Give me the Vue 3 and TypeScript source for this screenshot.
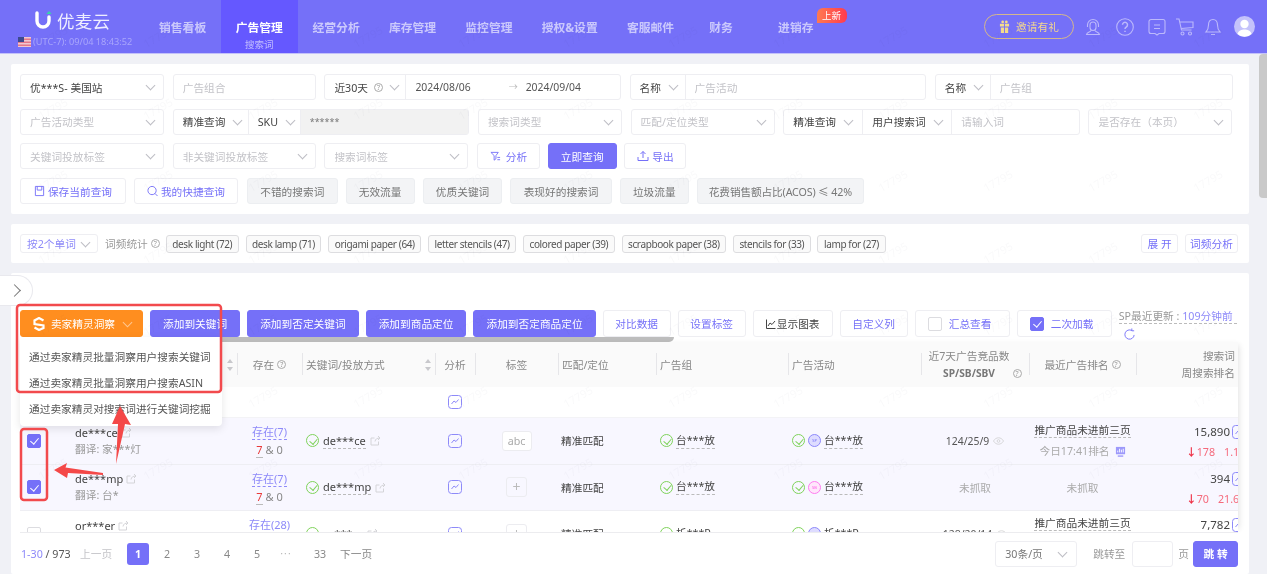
<script setup lang="ts">
interface Row {
  checked: boolean
  kw: string
  tr: string
  exist: string
  kw2: string
  tag: 'abc' | 'plus'
  group: string
  camp: 'sp' | 'sb'
  campName: string
  comp: string
  rank: boolean
  num: string
  down: string
  pct: string
}

const nav = ['销售看板', '广告管理', '经营分析', '库存管理', '监控管理', '授权&设置', '客服邮件', '财务', '进销存']
const quick = ['不错的搜索词', '无效流量', '优质关键词', '表现好的搜索词', '垃圾流量', '花费销售额占比(ACOS) ≤ 42%']
const tags = ['desk light (72)', 'desk lamp (71)', 'origami paper (64)', 'letter stencils (47)', 'colored paper (39)', 'scrapbook paper (38)', 'stencils for (33)', 'lamp for (27)']
const actions = ['添加到关键词', '添加到否定关键词', '添加到商品定位', '添加到否定商品定位']
const menu = ['通过卖家精灵批量洞察用户搜索关键词', '通过卖家精灵批量洞察用户搜索ASIN', '通过卖家精灵对搜索词进行关键词挖掘']
const pages = ['2', '3', '4', '5']
const marks = Array.from({ length: 84 }, (_, i) => i)

const rows: Row[] = [
  { checked: true, kw: 'de***ce', tr: '翻译: 家***灯', exist: '存在(7)', kw2: 'de***ce', tag: 'abc', group: '台***放', camp: 'sp', campName: '台***放', comp: '124/25/9', rank: true, num: '15,890', down: '178', pct: '1.13%' },
  { checked: true, kw: 'de***mp', tr: '翻译: 台*', exist: '存在(7)', kw2: 'de***mp', tag: 'plus', group: '台***放', camp: 'sb', campName: '台***放', comp: '', rank: false, num: '394', down: '70', pct: '21.60%' },
  { checked: false, kw: 'or***er', tr: '翻译: 折***', exist: '存在(28)', kw2: 'or***er', tag: 'plus', group: '析***P', camp: 'sp', campName: '析***P', comp: '128/20/14', rank: true, num: '7,782', down: '', pct: '' },
]
</script>

<template>
  <div class="page">
    <header class="topbar">
      <div class="brand">
        <div class="logo">
          <svg class="logo-mark" viewBox="0 0 18 20" width="18" height="20">
            <path d="M3 3v8a6 6 0 0 0 12 0V7" fill="none" stroke="#fff" stroke-width="3.4" stroke-linecap="round" />
            <path d="M15 1l2.6 3h-5.2z" fill="#36d6a8" />
          </svg>
          <span class="logo-text">优麦云</span>
        </div>
        <div class="clock">
          <svg viewBox="0 0 13 10" width="13" height="10" class="flag">
            <rect width="13" height="10" fill="#f1c8d0" />
            <rect y="1.5" width="13" height="1.5" fill="#e4788a" />
            <rect y="4.5" width="13" height="1.5" fill="#e4788a" />
            <rect y="7.5" width="13" height="1.5" fill="#e4788a" />
            <rect width="6" height="5" fill="#3d4a8f" />
          </svg>
          <span>(UTC-7): 09/04 18:43:52</span>
        </div>
      </div>
      <nav class="nav">
        <div v-for="(n, i) in nav" :key="n" class="nav-item" :class="{ active: i === 1, far: i === 7, farther: i === 8 }">
          <span class="nav-label">{{ n }}</span>
          <span v-if="i === 1" class="nav-sub">搜索词</span>
          <span v-if="i === 8" class="nav-new">上新</span>
        </div>
      </nav>
      <div class="top-right">
        <div class="invite">
          <svg viewBox="0 0 12 14" width="11" height="13"><path d="M1 4h10v3H1zM2 8h8v6H2z" fill="#f6dc8c" /><path d="M6 4v10" stroke="#7570f8" /><circle cx="4" cy="2" r="1.5" fill="#f6dc8c" /><circle cx="8" cy="2" r="1.5" fill="#f6dc8c" /></svg>
          <span>邀请有礼</span>
        </div>
        <svg class="ti" viewBox="0 0 20 20" width="20" height="20"><path d="M4.5 10V8a5.5 5.5 0 0 1 11 0v2M7 8a3 3 0 0 1 6 0v2.500a3 3 0 0 1-6 0zM8 13.500c-.3 1.600-4 1.600-4.500 4h13c-.5-2.400-4.200-2.400-4.500-4" /></svg>
        <svg class="ti" viewBox="0 0 20 20" width="20" height="20"><circle cx="10" cy="10" r="8.300" /><path d="M7.500 7.800a2.500 2.500 0 1 1 3.800 2.200c-.9.500-1.300 1-1.300 2" stroke-width="1.500" /><path d="M10 13.800v1.200" stroke-width="1.500" /></svg>
        <svg class="ti" viewBox="0 0 20 20" width="20" height="20"><path d="M4 2.500h12a2 2 0 0 1 2 2v10a2 2 0 0 1-2 2h-4l-2 1.500-2-1.500H4a2 2 0 0 1-2-2v-10a2 2 0 0 1 2-2zM7 8h6M7 11.500h6" /></svg>
        <svg class="ti near" viewBox="0 0 20 20" width="20" height="20"><path d="M1 2h3l2.500 11h10M5 5h13v5.500L6 11.500" /><circle cx="7.500" cy="16.500" r="1.500" /><circle cx="15" cy="16.500" r="1.500" /></svg>
        <svg class="ti near" viewBox="0 0 20 20" width="20" height="20"><path d="M10 2.500c-3 0-4.500 2.500-4.500 5.500 0 4-1.500 6-2.500 7h14c-1-1-2.500-3-2.500-7 0-3-1.500-5.500-4.500-5.500zM8 17.500h4" /></svg>
        <svg class="avatar" viewBox="0 0 21 21" width="21" height="21"><circle cx="10.500" cy="10.500" r="10.500" fill="#c4c2fb" /><circle cx="10.500" cy="8" r="4.200" fill="#fff" /><path d="M3.500 18c1-3.500 4-4.500 7-4.500s6 1 7 4.500a10 10 0 0 1-14 0z" fill="#fff" /></svg>
      </div>
    </header>

    <main class="content">
      <section class="card filters">
        <div class="frow">
          <div class="field w-s"><span class="val">优***S- 美国站</span><i class="chev" /></div>
          <div class="field w-s2"><span class="ph">广告组合</span></div>
          <div class="field w-l">
            <div class="seg seg-range"><span class="val">近30天</span><span class="qm">?</span><i class="chev" /></div>
            <div class="dates"><span>2024/08/06</span><span class="to">→</span><span>2024/09/04</span></div>
          </div>
          <div class="field w-l">
            <div class="seg seg-name"><span class="val">名称</span><i class="chev" /></div>
            <span class="ph pad">广告活动</span>
          </div>
          <div class="field w-l wide">
            <div class="seg seg-name"><span class="val">名称</span><i class="chev" /></div>
            <span class="ph pad">广告组</span>
          </div>
        </div>
        <div class="frow">
          <div class="field w-s"><span class="ph">广告活动类型</span><i class="chev" /></div>
          <div class="field w-l">
            <div class="seg seg-exact"><span class="val">精准查询</span><i class="chev" /></div>
            <div class="seg seg-sku"><span class="val">SKU</span><i class="chev" /></div>
            <div class="masked">******</div>
          </div>
          <div class="field w-s"><span class="ph">搜索词类型</span><i class="chev" /></div>
          <div class="field w-s"><span class="ph">匹配/定位类型</span><i class="chev" /></div>
          <div class="field w-l">
            <div class="seg seg-exact2"><span class="val">精准查询</span><i class="chev" /></div>
            <div class="seg seg-user"><span class="val">用户搜索词</span><i class="chev" /></div>
            <span class="ph pad">请输入词</span>
          </div>
          <div class="field w-s"><span class="ph">是否存在（本页）</span><i class="chev" /></div>
        </div>
        <div class="frow">
          <div class="field w-s"><span class="ph">关键词投放标签</span><i class="chev" /></div>
          <div class="field w-s2"><span class="ph">非关键词投放标签</span><i class="chev" /></div>
          <div class="field w-s"><span class="ph">搜索词标签</span><i class="chev" /></div>
          <button class="btn b-analyze">
            <svg viewBox="0 0 12 12" width="11" height="11" class="si"><path d="M1 1.500h8L6.500 5v3.500L4.500 10V5zM8 7h3M8 9.500h3" /></svg>
            分析
          </button>
          <button class="btn primary b-query">立即查询</button>
          <button class="btn b-export">
            <svg viewBox="0 0 12 12" width="12" height="12" class="si"><path d="M6 8V1.500M3.500 4 6 1.500 8.500 4M1 7v3.500h10V7" /></svg>
            导出
          </button>
        </div>
        <div class="frow qrow">
          <button class="btn b-save">
            <svg viewBox="0 0 12 12" width="11" height="12" class="si"><path d="M1.500 1h9v10h-9zM3.500 1v4h5V1" /></svg>
            保存当前查询
          </button>
          <button class="btn b-mine">
            <svg viewBox="0 0 12 12" width="11" height="12" class="si" stroke-width="1.300"><circle cx="5.500" cy="5.500" r="4.500" /><path d="m8.500 8.500 3 3" /></svg>
            我的快捷查询
          </button>
          <button v-for="q in quick" :key="q" class="btn gray">{{ q }}</button>
        </div>
      </section>

      <section class="card freq">
        <div class="freq-sel"><span>按2个单词</span><i class="chev" /></div>
        <span class="freq-label">词频统计</span><span class="qm">?</span>
        <div class="tags">
          <span v-for="t in tags" :key="t" class="tag">{{ t }}</span>
        </div>
        <button class="btn small b-open">展 开</button>
        <button class="btn small">词频分析</button>
      </section>

      <section class="card main-card">
        <div class="toolbar">
          <div class="seller-wrap">
            <button class="btn seller">
              <svg viewBox="0 0 14 14" width="14" height="14"><path d="M11.500 3.500 7 1 2.500 3.500V7l9 1.500v2.500L7 13l-4.500-2.500" fill="none" stroke="#fff" stroke-width="2.200" /></svg>
              <span>卖家精灵洞察</span>
              <i class="chev chev-w" />
            </button>
            <ul class="menu">
              <li v-for="m in menu" :key="m">{{ m }}</li>
            </ul>
          </div>
          <button v-for="a in actions" :key="a" class="btn primary act">{{ a }}</button>
          <button class="btn tool">对比数据</button>
          <button class="btn tool">设置标签</button>
          <button class="btn tool dark">
            <svg viewBox="0 0 10 10" width="10" height="10" class="si dk"><path d="M.5.500v9h9M2 7l2-3 2 1.500L9 2" /></svg>
            显示图表
          </button>
          <button class="btn tool">自定义列</button>
          <button class="btn tool chk-btn"><i class="cb" /><span>汇总查看</span></button>
          <button class="btn tool chk-btn"><i class="cb on" /><span>二次加载</span></button>
          <div class="update">
            <div class="update-line">SP最近更新 : <b>109分钟前</b></div>
            <svg viewBox="0 0 14 14" width="13" height="13" class="si refresh" stroke-width="1.500"><path d="M12 7.500A5 5 0 1 1 9.500 2.700M9.500.500v2.500H12" /></svg>
          </div>
        </div>
        <div class="bar-shade" />

        <div class="table">
          <div class="grid thead">
            <div class="th" />
            <div class="th sortable"><i class="sort" /></div>
            <div class="th sep center"><span>存在</span><span class="qm">?</span></div>
            <div class="th sep sortable"><span>关键词/投放方式</span><i class="sort" /></div>
            <div class="th sep center">分析</div>
            <div class="th sep center">标签</div>
            <div class="th sep">匹配/定位</div>
            <div class="th sep">广告组</div>
            <div class="th sep">广告活动</div>
            <div class="th sep stack comp-head">
              <span>近7天广告竞品数</span>
              <span class="th-sub"><b>SP/SB/SBV</b><span class="qm abs">?</span></span>
            </div>
            <div class="th sep center"><span>最近广告排名</span><span class="qm">?</span></div>
            <div class="th sep stack end"><span>搜索词</span><span>周搜索排名</span></div>
          </div>
          <div class="tbody">
            <div class="grid summary">
              <div /><div /><div /><div />
              <div class="td center">
                <svg class="chart" viewBox="0 0 14 14" width="14" height="14"><rect x=".5" y=".5" width="13" height="13" rx="3" /><path d="M3.500 9 6 6l2 1.500 2.500-3" /></svg>
              </div>
            </div>
            <div v-for="r in rows" :key="r.kw" class="grid row" :class="{ picked: r.checked }">
              <div class="td center-cb"><i class="cb" :class="{ on: r.checked }" /></div>
              <div class="td kw">
                <div class="kw-top">{{ r.kw }}
                  <svg class="share" viewBox="0 0 11 11" width="11" height="11"><path d="M8.500 6.500v3.500h-7.500V3h3.500M5 6.500c.4-2.500 2-3.500 5-3.500M8 1l2 2-2 2" /></svg>
                </div>
                <div class="muted">{{ r.tr }}</div>
              </div>
              <div class="td center col">
                <span class="link">{{ r.exist }}</span>
                <span class="nums"><em>7</em> &amp; 0</span>
              </div>
              <div class="td kw2">
                <i class="ok" /><span class="dashed">{{ r.kw2 }}</span>
                <svg class="share" viewBox="0 0 11 11" width="11" height="11"><path d="M8.500 6.500v3.500h-7.500V3h3.500M5 6.500c.4-2.500 2-3.500 5-3.500M8 1l2 2-2 2" /></svg>
              </div>
              <div class="td center">
                <svg class="chart" viewBox="0 0 14 14" width="14" height="14"><rect x=".5" y=".5" width="13" height="13" rx="3" /><path d="M3.500 9 6 6l2 1.500 2.500-3" /></svg>
              </div>
              <div class="td center">
                <span v-if="r.tag === 'abc'" class="abc">abc</span>
                <span v-else class="plus">+</span>
              </div>
              <div class="td text">精准匹配</div>
              <div class="td icons"><i class="ok" /><span class="dashed">{{ r.group }}</span></div>
              <div class="td icons">
                <i class="ok" /><i class="badge" :class="r.camp">{{ r.camp.toUpperCase() }}</i><span class="dashed">{{ r.campName }}</span>
              </div>
              <div class="td center">
                <template v-if="r.comp">
                  <span class="comp">{{ r.comp }}</span>
                  <svg viewBox="0 0 12 8" width="11" height="8" class="eye"><path d="M.5 4C2 1.500 4 .5 6 .5s4 1 5.500 3.500C10 6.500 8 7.500 6 7.500S2 6.500.5 4z" /><circle cx="6" cy="4" r="1.500" /></svg>
                </template>
                <span v-else class="none">未抓取</span>
              </div>
              <div class="td center col">
                <template v-if="r.rank">
                  <span class="dashed rank">推广商品未进前三页</span>
                  <span class="none when">今日17:41排名
                    <svg viewBox="0 0 12 12" width="11" height="11"><path d="M1 1h10v8H1z" fill="#9d99fb" /><path d="M3 7V5M5 7V3M7 7V4M9 7V3" stroke="#fff" /><path d="M3 11h6" stroke="#9d99fb" stroke-width="1.500" /></svg>
                  </span>
                </template>
                <span v-else class="none">未抓取</span>
              </div>
              <div class="td last">
                <div class="last-num">
                  <span>{{ r.num }}</span>
                  <svg class="chart" viewBox="0 0 14 14" width="14" height="14"><rect x=".5" y=".5" width="13" height="13" rx="3" /><path d="M3.500 9 6 6l2 1.500 2.500-3" /></svg>
                </div>
                <div v-if="r.down" class="last-delta"><span class="delta-val"><b>↓</b>{{ r.down }}</span><span>{{ r.pct }}</span></div>
              </div>
            </div>
          </div>
        </div>

        <footer class="pager">
          <span class="total"><b>1-30</b> / 973</span>
          <span class="pg-prev">上一页</span>
          <span class="pg-cur">1</span>
          <span v-for="p in pages" :key="p" class="pg">{{ p }}</span>
          <span class="pg-dots">• • •</span>
          <span class="pg-last">33</span>
          <span class="pg-next">下一页</span>
          <div class="pager-right">
            <div class="size"><span>30条/页</span><i class="chev" /></div>
            <span class="jump">跳转至</span>
            <div class="jump-in" />
            <span class="jump-pg">页</span>
            <button class="btn primary go">跳 转</button>
          </div>
        </footer>
      </section>
    </main>

    <div class="expander"><i class="chev-r" /></div>
    <div class="scroll-thumb" />

    <div class="watermark" aria-hidden="true">
      <span v-for="m in marks" :key="m">17795</span>
    </div>

    <svg class="annot" viewBox="0 0 1267 574" width="1267" height="574" aria-hidden="true">
      <rect x="17" y="305" width="204" height="87" rx="3" />
      <rect x="21" y="429" width="26" height="71" rx="3" />
      <path class="fill" d="M116 464 125 424 131 425 120 406 112 424 118 424z" />
      <path class="fill" d="M54 470 67 463 65.500 467.500 103 473 103 475 68 473 67 478z" />
    </svg>
  </div>
</template>

<style>
html, body { margin: 0; background: #f0f2f5; }
</style>

<style scoped>
* { box-sizing: border-box; }
.page {
  position: relative;
  width: 1267px;
  height: 574px;
  overflow: hidden;
  display: flex;
  flex-direction: column;
  background: #f0f1f6;
  font-family: "Noto Sans", "Noto Sans CJK SC", sans-serif;
  font-size: 10.7px;
  color: #444;
  filter: blur(0.35px);
}
i { display: inline-block; font-style: normal; }
button { font-family: inherit; cursor: default; }

/* top bar */
.topbar {
  flex: none;
  height: 54px;
  display: flex;
  background: #7570f8;
  border-bottom: 1px solid #c3c1fa;
  color: #fff;
}
.brand { width: 144px; flex: none; padding: 8px 0 0 18px; }
.logo { display: flex; align-items: center; margin-left: 16px; height: 24px; }
.logo-mark { flex: none; }
.logo-text { margin-left: 5px; font-size: 17.5px; color: #eef; letter-spacing: 0.3px; }
.clock { display: flex; align-items: center; gap: 2px; margin-top: 3px; font-size: 9.2px; color: #a9a6fb; white-space: nowrap; }
.flag { flex: none; }
.nav { display: flex; }
.nav-item {
  position: relative;
  display: flex;
  flex-direction: column;
  align-items: center;
  padding: 0 14.6px;
  height: 53px;
  color: rgba(255, 255, 255, .62);
  font-size: 11.8px;
  font-weight: 700;
}
.nav-item:first-child { padding: 0 14.5px 0 15px; }
.nav-label { margin-top: 19px; line-height: 16px; white-space: nowrap; }
.nav-item.active { background: #6558ff; color: #fff; padding: 0 15px; }
.nav-sub { font-size: 9.5px; font-weight: 400; color: rgba(255, 255, 255, .6); line-height: 13px; margin-top: 3px; }
.nav-item.far { margin-left: 6px; }
.nav-item.farther { margin-left: 16px; }
.nav-new {
  position: absolute;
  left: 53px;
  top: 8px;
  width: 30px;
  height: 15px;
  line-height: 15px;
  text-align: center;
  border-radius: 6px 6px 6px 0;
  background: linear-gradient(90deg, #ff7a50, #ff3a4f);
  font-size: 9.5px;
  font-weight: 400;
  color: #fff;
}
.top-right { margin-left: auto; display: flex; align-items: center; height: 53px; padding-right: 12.5px; }
.invite {
  width: 90px;
  height: 25px;
  border: 1px solid #d5b78c;
  border-radius: 13px;
  display: flex;
  align-items: center;
  justify-content: center;
  gap: 6px;
  color: #f3d690;
  margin-right: 9px;
}
.ti {
  margin-left: 12px;
  fill: none;
  stroke: #bcb9fb;
  stroke-width: 1.1;
}
.invite + .ti { margin-left: 0; }
.ti.near { margin-left: 8px; }
.avatar { margin-left: 10.5px; }

/* layout */
.content { flex: 1; min-height: 0; padding: 10px 18px 0 11px; display: flex; flex-direction: column; }
.card { background: #fff; border-radius: 2px; }

/* filters */
.filters { height: 150px; padding: 10px 9px; display: flex; flex-direction: column; gap: 8.7px; }
.frow { display: flex; gap: 8.7px; height: 26px; }
.field {
  height: 26px;
  border: 1px solid #eeeef2;
  border-radius: 3px;
  background: #fff;
  display: flex;
  align-items: center;
  padding-left: 9px;
  position: relative;
  white-space: nowrap;
}
.field > .chev { position: absolute; right: 9px; top: 7px; }
.w-s { width: 144px; }
.w-s2 { width: 143px; }
.w-l { width: 296.5px; padding-left: 0; }
.w-l.wide { width: 298px; }
.val { color: #444; }
.ph { color: #c3c3c8; }
.pad { padding-left: 9px; }
.chev {
  width: 7px;
  height: 7px;
  border-right: 1px solid #bdbdc4;
  border-bottom: 1px solid #bdbdc4;
  transform: rotate(45deg);
  flex: none;
}
.seg { height: 100%; display: flex; align-items: center; padding-left: 9px; border-right: 1px solid #eeeef2; flex: none; gap: 6px; }
.seg .chev { margin-top: -3px; margin-left: 3px; }
.seg-range { width: 81px; padding-right: 5px; gap: 3px; }
.seg-range .chev { margin-left: 5px; }
.seg-name { width: 55px; }
.seg-exact { width: 75px; }
.seg-sku { width: 52px; }
.seg-exact2 { width: 79px; }
.seg-user { width: 89px; }
.masked { flex: 1; height: 100%; background: #f2f2f2; color: #777; display: flex; align-items: center; padding-left: 9px; font-size: 9px; }
.dates { display: flex; flex: 1; padding-left: 9px; color: #555; font-size: 10.4px; }
.to { color: #bbb; margin: 0 9px 0 38px; width: 8px; font-size: 9px; }
.qm {
  display: inline-flex;
  align-items: center;
  justify-content: center;
  width: 9px;
  height: 9px;
  margin-left: 3px;
  border: 1px solid #aaa;
  border-radius: 50%;
  font-size: 7px;
  line-height: 1;
  color: #999;
  flex: none;
}
.btn {
  height: 26px;
  border: 1px solid #eeeef2;
  border-radius: 3px;
  background: #fff;
  color: #7570f8;
  font-size: 10.7px;
  padding: 0;
  display: inline-flex;
  align-items: center;
  justify-content: center;
  gap: 3px;
  white-space: nowrap;
  flex: none;
}
.si { fill: none; stroke: #7570f8; stroke-width: 1; }
.si.dk { stroke: #444; }
.btn.primary { background: #7570f8; border-color: #7570f8; color: #fff; }
.b-analyze { width: 63px; margin-right: -1px; gap: 5px; }
.b-query { width: 69px; }
.b-export { width: 62px; margin-left: -1px; }
.qrow { gap: 8px; }
.b-save { width: 106px; }
.b-mine { width: 104px; margin-right: 1px; }
.gray { background: #f3f4f6; color: #777; border-color: #eceef1; padding: 0 12.2px; }
.gray:last-child { padding: 0 11px; letter-spacing: -0.15px; }

/* frequency */
.freq { height: 39px; margin-top: 10px; display: flex; align-items: center; padding: 0 11px 0 9px; white-space: nowrap; }
.freq-sel {
  width: 78px;
  height: 19px;
  border: 1px solid #eeeef2;
  border-radius: 3px;
  display: flex;
  align-items: center;
  justify-content: space-between;
  padding: 0 8px 0 6px;
  color: #8e8af9;
}
.freq-sel .chev { margin-top: -3px; }
.freq-label { margin-left: 7px; color: #999; }
.tags { display: flex; gap: 6.8px; margin-left: 6px; flex: 1; }
.tag {
  height: 18px;
  line-height: 16px;
  padding: 0 5.5px;
  border: 1px solid #dddde0;
  border-radius: 3px;
  background: #fafafa;
  color: #555;
  font-size: 10px;
  letter-spacing: -0.38px;
}
.small { height: 19px; }
.b-open { width: 37px; margin-right: 7px; }
.freq .small:last-child { width: 53px; }

/* main card */
.main-card { margin-top: 10px; flex: 1; min-height: 0; padding: 37px 11px 0 9px; display: flex; flex-direction: column; position: relative; }
.toolbar { display: flex; gap: 7px; height: 27px; flex: none; }
.toolbar .btn { height: 27px; }
.seller-wrap { position: relative; width: 123px; flex: none; }
.btn.seller { width: 123px; background: #ff8e1f; border-color: #ff8e1f; color: #fff; gap: 5px; }
.chev-w { border-color: rgba(255, 255, 255, .5); margin: -3px 0 0 4px; }
.menu {
  position: absolute;
  z-index: 5;
  top: 27px;
  left: 0;
  width: 202px;
  height: 89px;
  margin: 0;
  padding: 7px 0 0;
  list-style: none;
  background: #fff;
  border-radius: 0 0 4px 4px;
  box-shadow: 0 3px 8px rgba(0, 0, 0, .1);
}
.menu li { height: 26px; line-height: 26px; padding-left: 9px; color: #555; white-space: nowrap; }
.act { padding: 0 12px; }
.tool { width: 68px; }
.tool.dark { width: 80px; color: #444; gap: 1px; }
.chk-btn { width: 95px; justify-content: flex-start; padding-left: 12px; gap: 7px; }
.update { width: 118px; flex: none; color: #999; white-space: nowrap; position: relative; }
.update-line { height: 14px; line-height: 13px; border-bottom: 1px dashed #bbb; }
.update-line b { font-weight: 400; color: #8e8af9; }
.refresh { display: block; margin: 4px 0 0 4px; }
.bar-shade { flex: none; height: 5px; width: 654px; background: #bdbdbd; border-radius: 0 0 5px 5px; }

/* table */
.table { flex: 1; min-height: 0; width: 1218px; display: flex; flex-direction: column; overflow: hidden; box-shadow: 4px 0 6px -3px rgba(0, 0, 0, .12); }
.grid {
  display: grid;
  grid-template-columns: 55px 162px 65px 133px 40px 83px 98px 132px 133px 108px 107px 102px;
}
.thead { height: 45px; flex: none; background: #fafafa; color: #888; }
.th { position: relative; display: flex; align-items: center; padding-left: 4px; white-space: nowrap; }
.th.sep::before {
  content: "";
  position: absolute;
  left: 0;
  top: 11px;
  height: 22px;
  border-left: 1px solid #e6e6e9;
}
.th.center { justify-content: center; padding-left: 0; }
.sortable { justify-content: space-between; padding-right: 4px; }
.sortable .sort { margin-left: auto; }
.sort { height: 12px; position: relative; width: 6px; }
.sort::before, .sort::after { content: ""; position: absolute; left: 0; border: 3px solid transparent; }
.sort::before { top: -3px; border-bottom: 4px solid #c8c8cc; }
.sort::after { bottom: -3px; border-top: 4px solid #c8c8cc; }
.stack { flex-direction: column; line-height: 17px; justify-content: center; }
.stack.end { align-items: flex-end; padding-right: 3px; }
.comp-head { padding: 0 12px 0 0; align-items: center; }
.th-sub { position: relative; width: 100%; text-align: center; font-size: 10.2px; color: #777; }
.th-sub b { font-weight: 700; }
.qm.abs { position: absolute; right: -4.5px; top: 4px; }
.tbody { flex: 1; min-height: 0; overflow: hidden; }
.summary { height: 31px; align-items: center; border-bottom: 1px solid #f3f3f6; }
.row { height: 46.5px; border-bottom: 1px solid #eeeef3; }
.row.picked { background: #f8f7ff; }
.td { display: flex; align-items: center; min-width: 0; white-space: nowrap; }
.td.center { justify-content: center; }
.td.col { flex-direction: column; justify-content: center; }
.center-cb { padding-left: 7px; }
.cb {
  width: 14px;
  height: 14px;
  border: 1px solid #dcdce0;
  border-radius: 2px;
  background: #fff;
  position: relative;
  flex: none;
}
.cb.on { background: #7570f8; border-color: #7570f8; }
.cb.on::after {
  content: "";
  position: absolute;
  left: 4px;
  top: 1.5px;
  width: 4px;
  height: 7px;
  border-right: 1.5px solid #fff;
  border-bottom: 1.5px solid #fff;
  transform: rotate(40deg);
}
.kw { flex-direction: column; align-items: flex-start; justify-content: center; line-height: 17px; }
.kw-top { display: flex; align-items: center; gap: 3px; color: #444; font-size: 11px; }
.muted { color: #999; }
.share { flex: none; fill: none; stroke: #d4d4d8; stroke-width: 1; }
.link { color: #8e8af9; border-bottom: 1px dashed #8e8af9; line-height: 15px; font-size: 11px; }
.nums { color: #888; margin-top: 3px; line-height: 14px; font-size: 11px; }
.nums em { font-style: normal; color: #e83a3a; border-bottom: 1px solid #bbb; }
.kw2 { padding-left: 4px; gap: 4px; }
.kw2 .dashed { font-size: 11px; }
.ok {
  width: 13px;
  height: 13px;
  flex: none;
  border: 1px solid #7fd35b;
  border-radius: 50%;
  position: relative;
}
.ok::after {
  content: "";
  position: absolute;
  left: 3.5px;
  top: 1.5px;
  width: 3.5px;
  height: 6px;
  border-right: 1.2px solid #7fd35b;
  border-bottom: 1.2px solid #7fd35b;
  transform: rotate(40deg);
}
.dashed { color: #444; border-bottom: 1px dashed #bbb; line-height: 15px; }
.chart { flex: none; fill: none; stroke: #8e8af9; stroke-width: 1; }
.abc { width: 30px; height: 20px; line-height: 18px; text-align: center; border: 1px solid #ececf0; border-radius: 3px; background: #fff; color: #aaa; }
.plus { width: 21px; height: 20px; line-height: 17px; text-align: center; border: 1px solid #ececf0; border-radius: 3px; color: #bbb; font-size: 14px; }
.text { padding-left: 3px; color: #444; }
.icons { padding-left: 4px; gap: 3px; }
.badge {
  width: 13px;
  height: 13px;
  border-radius: 50%;
  font-size: 4px;
  line-height: 11px;
  text-align: center;
  flex: none;
}
.badge.sp { border: 1.2px solid #8d88fb; color: #7570f8; background: #dedcff; }
.badge.sb { border: 1.2px solid #ff7df0; color: #ff5ae8; background: #ffe6fb; }
.comp { color: #555; font-size: 10.4px; }
.eye { margin-left: 4px; fill: none; stroke: #ccc; stroke-width: .8; }
.none { color: #aaa; }
.rank { line-height: 14px; }
.when { display: flex; align-items: center; gap: 5px; margin-top: 6px; line-height: 14px; }
.last { flex-direction: column; align-items: flex-start; overflow: visible; }
.last-num { width: 110px; display: flex; justify-content: flex-end; align-items: center; gap: 2px; margin-top: 6px; font-size: 11.5px; color: #444; line-height: 16px; }
.last-delta { margin: 5px 0 0 50px; color: #f56a7c; display: flex; gap: 9px; line-height: 14px; }
.delta-val { min-width: 20px; }
.delta-val b { color: #ee2f45; font-weight: 700; }

/* pager */
.pager {
  flex: none;
  height: 42px;
  width: 1218px;
  display: flex;
  align-items: center;
  border-top: 1px solid #ececef;
  background: #fff;
  padding-left: 1px;
  color: #999;
  white-space: nowrap;
}
.total { width: 59px; color: #555; }
.total b { font-weight: 400; color: #8e8af9; }
.pg-prev { width: 47px; color: #c4c4c8; }
.pg-cur {
  width: 22px;
  height: 22px;
  line-height: 22px;
  text-align: center;
  border-radius: 3px;
  background: #7570f8;
  color: #fff;
  font-weight: 700;
}
.pg { width: 30px; text-align: center; color: #888; }
.pg-cur + .pg { margin-left: 3px; }
.pg-dots { width: 27px; text-align: center; font-size: 6px; color: #bbb; }
.pg-last { width: 40px; text-align: center; color: #888; margin-left: 1px; }
.pg-next { color: #888; }
.pager-right { margin-left: auto; display: flex; align-items: center; }
.size {
  width: 82px;
  height: 26px;
  border: 1px solid #eeeef2;
  border-radius: 3px;
  display: flex;
  align-items: center;
  justify-content: space-between;
  padding: 0 10px 0 9px;
  color: #777;
}
.size .chev { margin-top: -3px; }
.jump { margin-left: 16px; }
.jump-in { width: 41px; height: 26px; margin-left: 7px; border: 1px solid #eeeef2; border-radius: 3px; }
.jump-pg { margin-left: 5px; }
.go { width: 45px; height: 26px; margin-left: 4px; font-weight: 700; }

/* overlays */
.expander {
  position: absolute;
  left: -1px;
  top: 275px;
  width: 34px;
  height: 31px;
  background: #fff;
  border: 1px solid #e9e9ee;
  border-left: 0;
  border-radius: 0 16px 16px 0;
  display: flex;
  align-items: center;
  justify-content: center;
}
.chev-r { width: 9px; height: 9px; border-top: 1px solid #777; border-right: 1px solid #777; transform: rotate(45deg); margin-left: -2px; }
.scroll-thumb {
  position: absolute;
  left: 1259px;
  top: 54px;
  width: 8px;
  height: 144px;
  border-radius: 4px 0 0 4px;
  background: #c9c9c9;
}
.watermark {
  position: absolute;
  inset: 0;
  display: grid;
  grid-template-columns: repeat(12, 105px);
  grid-auto-rows: 72px;
  pointer-events: none;
  overflow: hidden;
}
.watermark span {
  transform: rotate(-30deg);
  font-size: 11px;
  color: rgba(60, 60, 90, .03);
  align-self: center;
  justify-self: center;
}
.annot { position: absolute; left: 0; top: 0; pointer-events: none; z-index: 8; }
.annot rect { fill: none; stroke: #f24a4d; stroke-width: 2.5; }
.annot .fill { fill: #f44848; }
</style>
